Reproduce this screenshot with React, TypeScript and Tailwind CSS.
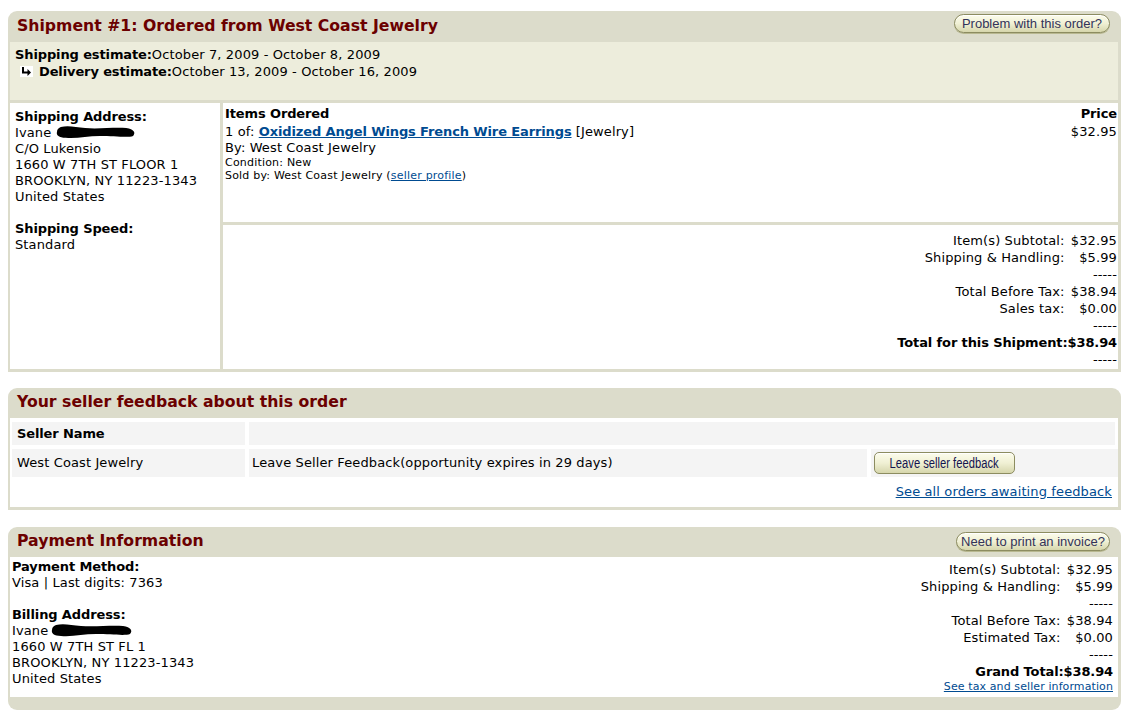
import React from "react";

const font = { fontFamily: '"DejaVu Sans", Verdana, sans-serif' };
const btnFont = { fontFamily: '"Liberation Sans", Arial, sans-serif' };
const B = "font-bold tracking-[-0.12px]";

function Blob({ w = 82 }: { w?: number }) {
  return (
    <svg width={w} height="14" viewBox="0 0 82 14" className="inline-block align-[-2px]">
      <path
        d="M5 2 C 12 0, 20 2, 30 3 C 45 4, 60 2, 72 3 C 80 4, 82 8, 79 11 C 74 13, 60 11, 45 11 C 32 11, 22 14, 10 13 C 3 13, 0 10, 1 7 C 1 4, 3 3, 5 2 Z"
        fill="#000"
      />
    </svg>
  );
}

function PillButton({ children, w }: { children: React.ReactNode; w: string }) {
  return (
    <div
      className={`${w} h-[19px] rounded-full border border-[#8c8c60] bg-gradient-to-b from-[#fcfcec] via-[#f0f0d4] to-[#d6d6ac] shadow-[inset_0_1px_0_#ffffff,0_1px_0_#b8b890] flex items-center justify-center text-[13px] leading-none text-[#333359] tracking-normal`}
      style={btnFont}
    >
      {children}
    </div>
  );
}

function Arrow() {
  return (
    <svg width="13" height="11" viewBox="0 0 13 11" className="inline-block align-[-1px] mr-[6px] ml-[5px]">
      <rect width="13" height="11" fill="#fff" />
      <path d="M3 1 V6.5 H8" stroke="#000" strokeWidth="2" fill="none" />
      <path d="M7.5 3 L11 6.5 L7.5 10 Z" fill="#000" />
    </svg>
  );
}

function Totals({ rows }: { rows: [string, string, boolean?][] }) {
  return (
    <div className="grid grid-cols-[auto_auto] text-right leading-[17px] content-start">
      {rows.map(([label, value, bold], i) => (
        <React.Fragment key={i}>
          <span className={bold ? B : "pr-[3px]"}>{label}</span>
          <span className={bold ? B : ""}>{value}</span>
        </React.Fragment>
      ))}
    </div>
  );
}

export default function App() {
  return (
    <div className="bg-white min-h-[719px] w-[1122px] text-[13px] tracking-[0.12px] text-black pt-[11px]" style={font}>
      {/* Panel 1 */}
      <div className="ml-[8px] w-[1113px] bg-[#dcdccb] rounded-t-[9px] pl-[2px] pr-[3px] pb-[3px]">
        <div className="h-[31px] flex items-start justify-between">
          <h1 className="pl-[7px] pt-[5px] text-[15.7px] tracking-normal leading-[20px] font-bold text-[#6b0000]">
            Shipment #1: Ordered from West Coast Jewelry
          </h1>
          <div className="pt-[3px] pr-[8px]">
            <PillButton w="w-[156px]">Problem with this order?</PillButton>
          </div>
        </div>
        <div className="bg-[#ededdc] h-[58px] pl-[5px] pt-[4px] leading-[17px]">
          <div>
            <span className={B}>Shipping estimate:</span>October 7, 2009 - October 8, 2009
          </div>
          <div>
            <Arrow />
            <span className={B}>Delivery estimate:</span>October 13, 2009 - October 16, 2009
          </div>
        </div>
        <div className="mt-[3px] flex gap-[3px]">
          <div className="w-[210px] bg-white pl-[5px] pt-[6px] leading-[16px] h-[266px]">
            <div className={B}>Shipping Address:</div>
            <div>
              Ivane <Blob w={80} />
            </div>
            <div>C/O Lukensio</div>
            <div>1660 W 7TH ST FLOOR 1</div>
            <div>BROOKLYN, NY 11223-1343</div>
            <div>United States</div>
            <div className={`mt-[16px] ${B}`}>Shipping Speed:</div>
            <div>Standard</div>
          </div>
          <div className="flex-1 flex flex-col gap-[3px]">
            <div className="bg-white h-[119px] pl-[2px] pr-[1px] pt-[2px] flex justify-between">
              <div>
                <div className={`${B} leading-[18px] mb-[1px]`}>Items Ordered</div>
                <div className="leading-[16px]">
                  1 of:{" "}
                  <a className={`${B} text-[#004b91] underline`}>Oxidized Angel Wings French Wire Earrings</a>{" "}
                  [Jewelry]
                </div>
                <div className="leading-[16px]">By: West Coast Jewelry</div>
                <div className="text-[11px] tracking-[0.2px] leading-[13px]">Condition: New</div>
                <div className="text-[11px] tracking-[0.2px] leading-[13px]">
                  Sold by: West Coast Jewelry (<a className="text-[#004b91] underline">seller profile</a>)
                </div>
              </div>
              <div className="text-right">
                <div className={`${B} leading-[18px] mb-[1px]`}>Price</div>
                <div className="leading-[16px]">$32.95</div>
              </div>
            </div>
            <div className="bg-white h-[144px] pt-[7px] pr-[1px] flex justify-end">
              <Totals
                rows={[
                  ["Item(s) Subtotal:", "$32.95"],
                  ["Shipping & Handling:", "$5.99"],
                  ["", "-----"],
                  ["Total Before Tax:", "$38.94"],
                  ["Sales tax:", "$0.00"],
                  ["", "-----"],
                  ["Total for this Shipment:", "$38.94", true],
                  ["", "-----"],
                ]}
              />
            </div>
          </div>
        </div>
      </div>

      {/* Panel 2 */}
      <div className="mt-[16px] ml-[8px] w-[1113px] bg-[#dcdccb] rounded-t-[9px] pl-[2px] pr-[3px] pb-[3px]">
        <div className="h-[30px] flex items-start">
          <h2 className="pl-[7px] pt-[4px] text-[15.7px] tracking-normal leading-[20px] font-bold text-[#6b0000]">
            Your seller feedback about this order
          </h2>
        </div>
        <div className="bg-white h-[89px] pl-[2px] pr-[3px] pt-[4px]">
          <div className="grid grid-cols-[233px_618px_1fr] gap-[4px]">
            <div className={`bg-[#f4f4f4] h-[23px] pl-[5px] flex items-center ${B}`}>Seller Name</div>
            <div className="bg-[#f4f4f4] h-[23px] col-span-2"></div>
            <div className="bg-[#f4f4f4] h-[28px] pl-[5px] flex items-center">West Coast Jewelry</div>
            <div className="bg-[#f4f4f4] h-[28px] pl-[3px] flex items-center">
              Leave Seller Feedback(opportunity expires in 29 days)
            </div>
            <div className="bg-[#f4f4f4] h-[28px] pl-[3px] flex items-center -mr-[3px]">
              <div
                className="w-[141px] h-[22px] rounded-[5px] border border-[#8c8c60] bg-gradient-to-b from-[#fcfcec] via-[#f0f0d4] to-[#d6d6ac] shadow-[inset_0_1px_0_#ffffff] flex items-center justify-center text-[14px] leading-none text-[#13134f] tracking-normal"
                style={btnFont}
              >
                <span className="inline-block scale-x-[0.8] whitespace-nowrap">Leave seller feedback</span>
              </div>
            </div>
          </div>
          <div className="mt-[7px] text-right pr-[3px] leading-[16px]">
            <a className="text-[#004b91] underline">See all orders awaiting feedback</a>
          </div>
        </div>
      </div>

      {/* Panel 3 */}
      <div className="mt-[17px] ml-[8px] w-[1113px] bg-[#dcdccb] rounded-[9px] pl-[2px] pr-[3px] pb-[13px]">
        <div className="h-[30px] flex items-start justify-between">
          <h2 className="pl-[7px] pt-[4px] text-[15.7px] tracking-normal leading-[20px] font-bold text-[#6b0000]">
            Payment Information
          </h2>
          <div className="pt-[5px] pr-[8px]">
            <PillButton w="w-[154px]">Need to print an invoice?</PillButton>
          </div>
        </div>
        <div className="bg-white h-[140px] flex justify-between">
          <div className="pl-[2px] pt-[2px] leading-[16px]">
            <div className={B}>Payment Method:</div>
            <div>Visa | Last digits: 7363</div>
            <div className={`mt-[16px] ${B}`}>Billing Address:</div>
            <div>
              Ivane<Blob w={88} />
            </div>
            <div>1660 W 7TH ST FL 1</div>
            <div>BROOKLYN, NY 11223-1343</div>
            <div>United States</div>
          </div>
          <div className="pr-[5px] pt-[4px] flex flex-col items-end">
            <Totals
              rows={[
                ["Item(s) Subtotal:", "$32.95"],
                ["Shipping & Handling:", "$5.99"],
                ["", "-----"],
                ["Total Before Tax:", "$38.94"],
                ["Estimated Tax:", "$0.00"],
                ["", "-----"],
                ["Grand Total:", "$38.94", true],
              ]}
            />
            <a className="text-[11px] tracking-[0.1px] leading-[13px] text-[#004b91] underline">See tax and seller information</a>
          </div>
        </div>
      </div>
    </div>
  );
}
